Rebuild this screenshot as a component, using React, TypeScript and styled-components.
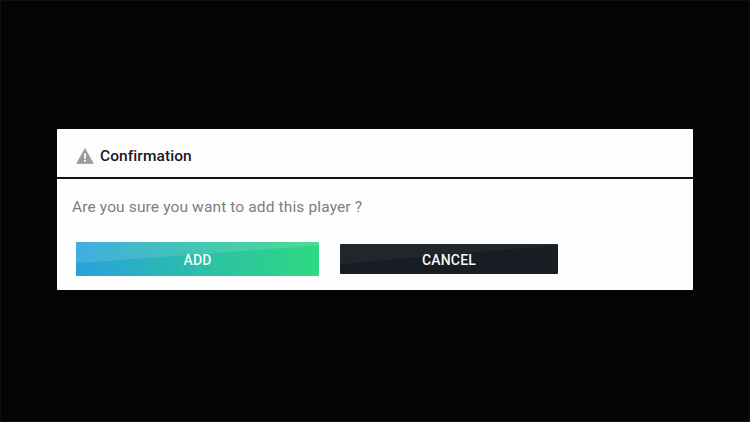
import React from "react";
import styled, { createGlobalStyle } from "styled-components";

const GlobalStyle = createGlobalStyle`
    html, body {
        margin: 0;
        padding: 0;
        background: #020203;
    }
    * {
        box-sizing: border-box;
    }
`;

const Screen = styled.div`
    width: 750px;
    height: 422px;
    padding: 128px 56px 0;
    background: #040405;
    border: 1px solid #0e0e17;
    font-family: Roboto, "Liberation Sans", sans-serif;
    overflow: hidden;
`;

const Dialog = styled.div`
    width: 636px;
    height: 161px;
    background: #fdfdfe;
    border-radius: 1px;
    display: flex;
    flex-direction: column;
`;

const Header = styled.div`
    height: 50px;
    flex: none;
    padding: 5px 0 0 19px;
    display: flex;
    align-items: center;
    gap: 6px;
    border-bottom: 2px solid #111;
`;

const Title = styled.span`
    font-size: 15.5px;
    font-weight: 500;
    letter-spacing: 0.08px;
    color: #1a1a1a;
`;

const Message = styled.p`
    margin: 0;
    padding: 18px 0 0 15px;
    height: 63px;
    flex: none;
    font-size: 15.5px;
    line-height: 20px;
    letter-spacing: 0.13px;
    color: #7d7d7d;
`;

const Actions = styled.div`
    display: flex;
    align-items: center;
    gap: 21px;
    padding-left: 19px;
    height: 34px;
`;

const ActionButton = styled.button<{ $primary?: boolean }>`
    border: 0;
    padding: 1px 0 0;
    border-radius: 1px;
    font-family: inherit;
    font-size: 14px;
    font-weight: 500;
    letter-spacing: 0.2px;
    color: #f6f8f8;
    width: ${(p) => (p.$primary ? "243px" : "218px")};
    height: ${(p) => (p.$primary ? "34px" : "30px")};
    background: ${(p) =>
        p.$primary
            ? `linear-gradient(175.8deg, rgba(255,255,255,0.12) 40%, rgba(255,255,255,0) 42%),
               linear-gradient(90deg, #28a2dc 0%, #2bbea9 50%, #2fd982 100%)`
            : `linear-gradient(175deg, rgba(255,255,255,0.04) 40%, rgba(255,255,255,0) 42%),
               #181d24`};
`;

const WarningIcon = () => (
    <svg width="18" height="16" viewBox="0 0 18 16">
        <path d="M9 0.3 L17.6 15.7 L0.4 15.7 Z" fill="#9b9b9b" stroke="#9b9b9b" strokeWidth="0.4" strokeLinejoin="round" />
        <rect x="8.1" y="5.4" width="1.8" height="5.4" fill="#fdfdfe" />
        <rect x="8.1" y="11.9" width="1.8" height="1.8" fill="#fdfdfe" />
    </svg>
);

const App: React.FC = () => {
    return (
        <>
            <GlobalStyle />
            <Screen>
                <Dialog>
                    <Header>
                        <WarningIcon />
                        <Title>Confirmation</Title>
                    </Header>
                    <Message>Are you sure you want to add this player ?</Message>
                    <Actions>
                        <ActionButton $primary>ADD</ActionButton>
                        <ActionButton>CANCEL</ActionButton>
                    </Actions>
                </Dialog>
            </Screen>
        </>
    );
};

export default App;
